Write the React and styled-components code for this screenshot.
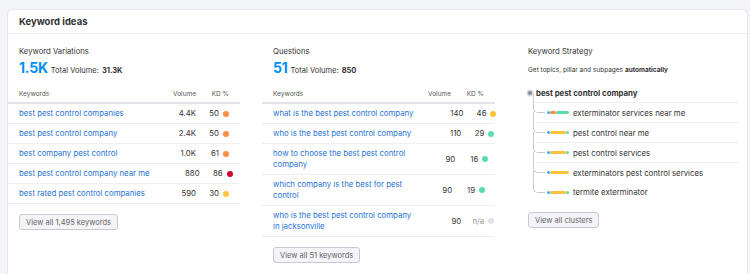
import styled, { createGlobalStyle } from "styled-components";

const GlobalStyle = createGlobalStyle`
  html, body {
    margin: 0;
    padding: 0;
    background: #f4f5f9;
  }
  body {
    font-family: Inter, "Noto Sans", Arial, sans-serif;
    color: #333;
    -webkit-font-smoothing: antialiased;
  }
`;

const Page = styled.div`
  padding: 9px 2px 0 7px;
  height: 274px;
  box-sizing: border-box;
  overflow: hidden;
`;

const Card = styled.section`
  background: #fff;
  border: 1px solid #e6e7ee;
  border-bottom: none;
  border-radius: 6px 6px 0 0;
  height: 280px;
  box-sizing: border-box;
`;

const CardHeader = styled.header`
  height: 23px;
  display: flex;
  align-items: center;
  padding: 0 11px;
  font-size: 9.5px;
  font-weight: 700;
  color: #333;
  border-bottom: 1px solid #eaebf0;
`;

const Columns = styled.div`
  display: grid;
  grid-template-columns: 232px 233px 1fr;
  column-gap: 22px;
  padding: 12px 9px 0 0;
`;

const Column = styled.div`
  display: flex;
  flex-direction: column;
`;

const Title = styled.div`
  font-size: 7.7px;
  line-height: 12px;
  color: #333;
  padding: 0 11px;
`;

const Summary = styled.div`
  display: flex;
  align-items: baseline;
  gap: 3px;
  padding: 0 11px;
  margin-top: 1px;
  height: 18px;
  font-size: 7.5px;
  color: #333;
`;

const BigNumber = styled.span`
  font-size: 14px;
  font-weight: 700;
  color: #008ff8;
  letter-spacing: -0.2px;
`;

const Strong = styled.b`
  font-weight: 700;
`;

const Table = styled.div`
  margin-top: 9px;
`;

const HeadRow = styled.div`
  display: grid;
  grid-template-columns: 1fr 50px 33px;
  align-items: center;
  height: 16px;
  padding: 0 11px;
  border-bottom: 2px solid #e3e4ea;
  font-size: 6.5px;
  color: #555;
`;

const Row = styled.div`
  display: grid;
  grid-template-columns: 1fr 50px 33px;
  align-items: center;
  padding: 4px 11px;
  border-bottom: 1px solid #eeeff3;
  font-size: 7.8px;
  line-height: 11px;
`;

const Right = styled.div`
  text-align: right;
`;

const KeywordLink = styled.a`
  color: #1f74d4;
  text-decoration: none;
  display: flex;
  flex-direction: column;
  white-space: nowrap;
`;

const Num = styled.div`
  text-align: right;
  color: #333;
`;

const Kd = styled.div`
  display: flex;
  align-items: center;
  justify-content: flex-end;
  gap: 4px;
  color: ${(p) => (p.$na ? "#999" : "#333")};
`;

const Dot = styled.span`
  width: 6px;
  height: 6px;
  border-radius: 50%;
  background: ${(p) => p.$color};
`;

const Button = styled.button`
  align-self: flex-start;
  margin: 10px 0 0 11px;
  height: 16px;
  padding: 0 6px;
  border: 1px solid #c8cad2;
  border-radius: 3px;
  background: #f4f4f8;
  color: #666;
  font-family: inherit;
  font-size: 7.5px;
`;

const Hint = styled.div`
  font-size: 6.5px;
  line-height: 12px;
  color: #333;
  padding: 0 11px;
  margin-top: 6px;
`;

const Tree = styled.div`
  margin-top: 11px;
  padding-left: 11px;
`;

const Root = styled.div`
  display: flex;
  align-items: center;
  gap: 4px;
  height: 12px;
  font-size: 7.8px;
  font-weight: 700;
  color: #333;
`;

const RootDot = styled.span`
  width: 4px;
  height: 4px;
  border-radius: 50%;
  background: #8a8c96;
  box-shadow: 0 0 0 1.5px #d6d8e0;
`;

const Children = styled.div`
  margin-top: 3px;
`;

const Child = styled.div`
  position: relative;
  display: flex;
  align-items: center;
  height: 20px;
  margin-left: 7px;
  padding-left: 12px;
  border-top: ${(p) => (p.$last ? "none" : "1px solid #eeeff3")};
  box-sizing: border-box;
  font-size: 7.8px;
  color: #333;

  &::before {
    content: "";
    position: absolute;
    left: -2px;
    top: ${(p) => (p.$first ? "-9px" : "-11px")};
    bottom: 9px;
    width: 11px;
    border-left: 1px solid #c9cbd3;
    border-bottom: 1px solid #c9cbd3;
    border-bottom-left-radius: 5px;
  }
`;

const Bars = styled.span`
  display: flex;
  align-items: center;
  width: 22px;
  margin-right: 4px;
`;

const Seg = styled.span`
  height: 3px;
  border-radius: 2px;
  width: ${(p) => p.$w}px;
  background: ${(p) => p.$color};
`;

const COLORS = {
  orange: "#ff8c43",
  red: "#d1002f",
  yellow: "#fdc23c",
  green: "#59ddaa",
  gray: "#e0e1e9",
  blue: "#2bb3ff",
};

const variations = [
  { kw: ["best pest control companies"], vol: "4.4K", kd: "50", c: "orange" },
  { kw: ["best pest control company"], vol: "2.4K", kd: "50", c: "orange" },
  { kw: ["best company pest control"], vol: "1.0K", kd: "61", c: "orange" },
  { kw: ["best pest control company near me"], vol: "880", kd: "86", c: "red" },
  { kw: ["best rated pest control companies"], vol: "590", kd: "30", c: "yellow" },
];

const questions = [
  { kw: ["what is the best pest control company"], vol: "140", kd: "46", c: "yellow" },
  { kw: ["who is the best pest control company"], vol: "110", kd: "29", c: "green" },
  { kw: ["how to choose the best pest control", "company"], vol: "90", kd: "16", c: "green" },
  { kw: ["which company is the best for pest", "control"], vol: "90", kd: "19", c: "green" },
  { kw: ["who is the best pest control company", "in jacksonville"], vol: "90", kd: "n/a", c: "gray" },
];

const clusters = [
  { name: "exterminator services near me", segs: [["blue", 3], ["orange", 6], ["green", 13]] },
  { name: "pest control near me", segs: [["blue", 3], ["yellow", 16], ["green", 3]] },
  { name: "pest control services", segs: [["blue", 3], ["yellow", 16], ["green", 3]] },
  { name: "exterminators pest control services", segs: [["blue", 3], ["yellow", 19]] },
  { name: "termite exterminator", segs: [["blue", 3], ["yellow", 16], ["green", 3]] },
];

function KeywordTable({ rows }) {
  return (
    <Table>
      <HeadRow>
        <div>Keywords</div>
        <Right>Volume</Right>
        <Right>KD %</Right>
      </HeadRow>
      {rows.map((r) => (
        <Row key={r.kw.join(" ")}>
          <KeywordLink href="#">
            {r.kw.map((line) => (
              <span key={line}>{line}</span>
            ))}
          </KeywordLink>
          <Num>{r.vol}</Num>
          <Kd $na={r.kd === "n/a"}>
            {r.kd}
            <Dot $color={COLORS[r.c]} />
          </Kd>
        </Row>
      ))}
    </Table>
  );
}

export default function App() {
  return (
    <>
      <GlobalStyle />
      <Page>
        <Card>
          <CardHeader>Keyword ideas</CardHeader>
          <Columns>
            <Column>
              <Title>Keyword Variations</Title>
              <Summary>
                <BigNumber>1.5K</BigNumber> Total Volume: <Strong>31.3K</Strong>
              </Summary>
              <KeywordTable rows={variations} />
              <Button>View all 1,495 keywords</Button>
            </Column>
            <Column>
              <Title>Questions</Title>
              <Summary>
                <BigNumber>51</BigNumber> Total Volume: <Strong>850</Strong>
              </Summary>
              <KeywordTable rows={questions} />
              <Button>View all 51 keywords</Button>
            </Column>
            <Column>
              <Title>Keyword Strategy</Title>
              <Hint>
                Get topics, pillar and subpages <Strong>automatically</Strong>
              </Hint>
              <Tree>
                <Root>
                  <RootDot />
                  best pest control company
                </Root>
                <Children>
                  {clusters.map((c, i) => (
                    <Child key={c.name} $first={i === 0} $last={i === clusters.length - 1}>
                      <Bars>
                        {c.segs.map(([color, w], j) => (
                          <Seg key={j} $color={COLORS[color]} $w={w} />
                        ))}
                      </Bars>
                      {c.name}
                    </Child>
                  ))}
                </Children>
              </Tree>
              <Button>View all clusters</Button>
            </Column>
          </Columns>
        </Card>
      </Page>
    </>
  );
}
